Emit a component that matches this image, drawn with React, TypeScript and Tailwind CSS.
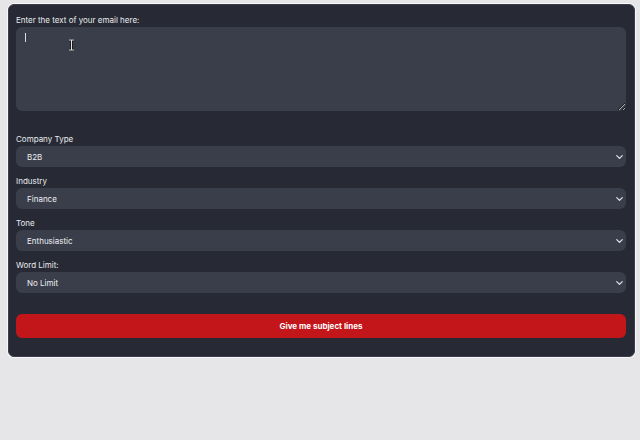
import { ChevronDown } from "lucide-react";

const fields = [
  { label: "Company Type", value: "B2B", options: ["B2B", "B2C"] },
  { label: "Industry", value: "Finance", options: ["Finance", "Technology", "Healthcare", "Retail"] },
  { label: "Tone", value: "Enthusiastic", options: ["Enthusiastic", "Professional", "Casual", "Urgent"] },
  { label: "Word Limit:", value: "No Limit", options: ["No Limit", "5", "10", "15"] },
];

function SelectField({ label, value, options }: { label: string; value: string; options: string[] }) {
  return (
    <div className="mt-[9px] flex flex-col gap-[2px]">
      <label className="block h-[10px] leading-[10px] text-[8px] text-[#e9eaee]">{label}</label>
      <div className="relative">
        <select
          defaultValue={value}
          className="block h-[21px] w-full appearance-none rounded-[6px] bg-[#3a3d4a] pl-[11px] text-[8px] text-[#eef0f3] outline-none"
        >
          {options.map((o) => (
            <option key={o}>{o}</option>
          ))}
        </select>
        <ChevronDown
          size={11}
          strokeWidth={2.6}
          className="pointer-events-none absolute right-[1px] top-1/2 -translate-y-1/2 text-[#e6e7ea]"
        />
      </div>
    </div>
  );
}

function App() {
  return (
    <div className="min-h-[440px] bg-[#e6e6e9] pl-[8px] pr-[5px] pt-[4px] font-['Inter',sans-serif]">
      <div className="rounded-[6px] border border-[#3b3e49] bg-[#272a35] pb-[18px] pl-[7px] pr-[8px] pt-[10px] shadow-[0_0_0_1px_#f7f7f9]">
        <div className="flex flex-col gap-[2px]">
          <label className="block h-[10px] leading-[10px] text-[8px] text-[#e9eaee]">
            Enter the text of your email here:
          </label>
          <div className="relative">
            <textarea className="block h-[84px] w-full rounded-[6px] bg-[#3a3d4a] p-[8px] text-[8px] text-white outline-none" />
            <div className="pointer-events-none absolute left-[9px] top-[6px] h-[9px] w-[1px] bg-[#d8dadf]" />
            <svg
              width="7"
              height="12"
              viewBox="0 0 7 12"
              className="pointer-events-none absolute left-[52px] top-[12px]"
            >
              <path d="M1 1h5M3.5 1v10M1 11h5" stroke="#111" strokeWidth="2.4" fill="none" />
              <path d="M1 1h5M3.5 1v10M1 11h5" stroke="#e5e5e5" strokeWidth="1" fill="none" />
            </svg>
          </div>
        </div>
        <div className="h-[14px]" />
        {fields.map((f) => (
          <SelectField key={f.label} {...f} />
        ))}
        <button className="mt-[21px] block h-[24px] w-full rounded-[6px] bg-[#c3161a] text-[8px] font-bold text-white">
          Give me subject lines
        </button>
      </div>
    </div>
  );
}

export default App;
